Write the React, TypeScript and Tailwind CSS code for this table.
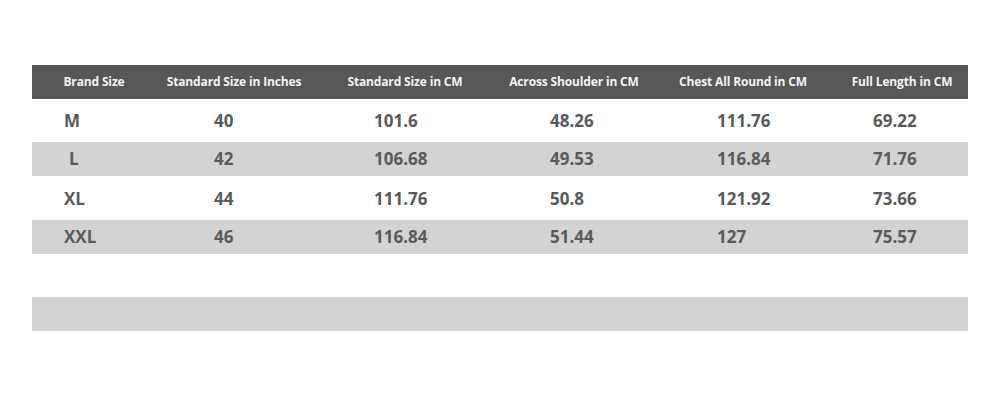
import React from 'react';

const columns = [
  { label: 'Brand Size', width: 'w-[124px]', pad: 'pl-[32px]' },
  { label: 'Standard Size in Inches', width: 'w-[156px]', pad: 'pl-[58px]' },
  { label: 'Standard Size in CM', width: 'w-[186px]', pad: 'pl-[62px]' },
  { label: 'Across Shoulder in CM', width: 'w-[152px]', pad: 'pl-[52px]' },
  { label: 'Chest All Round in CM', width: 'w-[186px]', pad: 'pl-[67px]' },
  { label: 'Full Length in CM', width: 'w-[132px]', pad: 'pl-[37px]' },
];

const rows = [
  { values: ['M', '40', '101.6', '48.26', '111.76', '69.22'], shaded: false },
  { values: ['L', '42', '106.68', '49.53', '116.84', '71.76'], shaded: true },
  { values: ['XL', '44', '111.76', '50.8', '121.92', '73.66'], shaded: false },
  { values: ['XXL', '46', '116.84', '51.44', '127', '75.57'], shaded: true },
];

const SizeChart: React.FC = () => {
  return (
    <div className="w-[1000px] h-[400px] bg-white pt-[65px] px-[32px] font-['Open_Sans',sans-serif]">
      <div className="w-[936px]">
        <div className="flex h-[34px] items-center bg-[#575757] text-[#f4f4f4] text-[12px] font-bold tracking-[-0.15px]">
          {columns.map((col) => (
            <div key={col.label} className={`${col.width} text-center`}>
              {col.label}
            </div>
          ))}
        </div>

        {rows.map((row, i) => (
          <div
            key={row.values[0]}
            className={`flex items-center text-[17px] font-bold text-[#5a5a5a] ${
              row.shaded ? 'h-[34px] bg-[#d3d3d3]' : i === 0 ? 'h-[43px] pt-[1px]' : 'h-[44px] pt-[1px]'
            }`}
          >
            {row.values.map((value, j) => (
              <div
                key={j}
                className={`${columns[j].width} ${columns[j].pad} ${value === 'L' ? 'pl-[37px]' : ''}`}
              >
                {value}
              </div>
            ))}
          </div>
        ))}

        <div className="h-[43px]" />
        <div className="h-[34px] bg-[#d3d3d3]" />
      </div>
    </div>
  );
};

export default function App() {
  return <SizeChart />;
}
